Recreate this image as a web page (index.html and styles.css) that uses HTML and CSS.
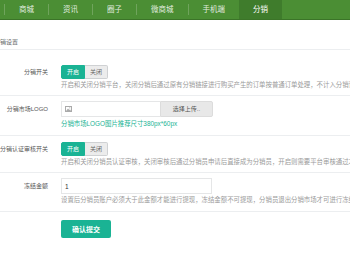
FILE: index.html
```html
<!DOCTYPE html>
<html lang="zh-CN">
<head>
  <meta charset="UTF-8">
  <meta name="viewport" content="width=device-width, initial-scale=1">
  <title>分销设置</title>
  <link rel="stylesheet" href="styles.css">
</head>
<body>
  <div class="topnav">
    <span class="sep"></span><a class="nav-item" href="#">商城</a>
    <span class="sep"></span><a class="nav-item" href="#">资讯</a>
    <span class="sep"></span><a class="nav-item" href="#">圈子</a>
    <span class="sep"></span><a class="nav-item" href="#">微商城</a>
    <span class="sep"></span><a class="nav-item" href="#">手机端</a>
    <a class="nav-item active" href="#">分销</a>
  </div>

  <div class="page">
    <div class="title">分销设置</div>

    <div class="row row-switch first">
      <label class="row-label">分销开关</label>
      <div class="row-body">
        <div class="switch"><span class="on">开启</span><span class="off">关闭</span></div>
        <p class="help">开启和关闭分销平台，关闭分销后通过原有分销链接进行购买产生的订单按普通订单处理，不计入分销订单</p>
      </div>
    </div>

    <div class="row row-input">
      <label class="row-label">分销市场LOGO</label>
      <div class="row-body">
        <div class="upload">
          <div class="upload-field">
            <svg class="pic-icon" width="7" height="6" viewBox="0 0 7 6">
              <rect x="0.5" y="0.5" width="6" height="5" fill="#fff" stroke="#aaa"/>
              <path d="M1 5 L3 2.6 L4.3 4 L5 3.3 L6 5 Z" fill="#aaa"/>
              <circle cx="4.8" cy="1.8" r="0.6" fill="#aaa"/>
            </svg>
          </div>
          <div class="upload-btn">选择上传..</div>
        </div>
        <p class="help tip">分销市场LOGO图片推荐尺寸380px*60px</p>
      </div>
    </div>

    <div class="row row-switch">
      <label class="row-label">分销认证审核开关</label>
      <div class="row-body">
        <div class="switch"><span class="on">开启</span><span class="off">关闭</span></div>
        <p class="help">开启和关闭分销员认证审核，关闭审核后通过分销员申请后直接成为分销员，开启则需要平台审核通过才能成为分销员</p>
      </div>
    </div>

    <div class="row row-input">
      <label class="row-label">冻结金额</label>
      <div class="row-body">
        <input class="text-input" type="text" value="1">
        <p class="help">设置后分销员账户必须大于此金额才能进行提现，冻结金额不可提现，分销员退出分销市场才可进行冻结金额提现</p>
      </div>
    </div>

    <div class="actions">
      <button class="btn-submit">确认提交</button>
    </div>
  </div>
</body>
</html>
```

FILE: styles.css
```css
body {
  margin: 0;
  font-family: 'Liberation Sans', 'Noto Sans CJK SC', sans-serif;
  background: #fff;
  overflow: hidden;
}
.topnav {
  display: flex;
  align-items: center;
  height: 19px;
  background: #4b8e34;
  border-bottom: 1px solid #3b7428;
  padding-left: 4px;
}
.nav-item {
  color: rgba(255,255,255,0.85);
  font-size: 7.5px;
  line-height: 19px;
  padding: 0 14px;
  text-decoration: none;
}
.nav-item.active {
  background: #3f7c2c;
  color: #fff;
}
.sep {
  width: 1px;
  height: 11px;
  background: rgba(255,255,255,0.2);
}
.page {
  margin-left: -12px;
  white-space: nowrap;
}
.title {
  font-size: 6px;
  line-height: 10px;
  color: #676a6c;
  padding: 17px 0 2px 6px;
  border-bottom: 1px solid #eceef0;
}
.row {
  display: flex;
  padding: 5px 0 6px;
  border-bottom: 1px solid #eceef0;
}
.row-switch {
  padding: 6px 0 5px;
}
.row.first {
  padding-top: 15px;
}
.row-label {
  width: 60px;
  flex: none;
  text-align: right;
  font-size: 6px;
  line-height: 14px;
  color: #555;
}
.row-input .row-label {
  line-height: 16px;
}
.row-body {
  margin-left: 13px;
}
.switch {
  display: flex;
  height: 14px;
}
.switch span {
  font-size: 6px;
  line-height: 12px;
  padding: 0 5px;
  border: 1px solid #cfd1d3;
  background: #ececec;
  color: #666;
}
.switch .on {
  background: #1ab394;
  border-color: #1ab394;
  color: #fff;
  border-radius: 2px 0 0 2px;
}
.switch .off {
  border-left: 0;
  border-radius: 0 2px 2px 0;
}
.help {
  margin: 1px 0 0;
  font-size: 6.4px;
  line-height: 10px;
  color: #9a9a9a;
}
.help.tip {
  margin-top: 2px;
  color: #1ab394;
}
.upload {
  display: flex;
  height: 16px;
}
.upload-field {
  width: 99px;
  box-sizing: border-box;
  border: 1px solid #e5e6e7;
  border-right: 0;
  display: flex;
  align-items: center;
  padding-left: 3px;
}
.upload-btn {
  width: 53px;
  box-sizing: border-box;
  background: #e8e8e8;
  border: 1px solid #dcdcdc;
  border-radius: 0 2px 2px 0;
  font-size: 6px;
  line-height: 14px;
  text-align: center;
  color: #555;
}
.text-input {
  display: block;
  width: 151px;
  height: 16px;
  box-sizing: border-box;
  border: 1px solid #e5e6e7;
  padding: 0 3px;
  font-family: inherit;
  font-size: 6.5px;
  color: #333;
  outline: none;
}
.actions {
  padding: 6px 0 0 73px;
}
.btn-submit {
  width: 50px;
  height: 18px;
  background: #1ab394;
  border: none;
  border-radius: 2px;
  color: #fff;
  font-family: inherit;
  font-size: 7px;
  font-weight: bold;
  cursor: pointer;
}
```
